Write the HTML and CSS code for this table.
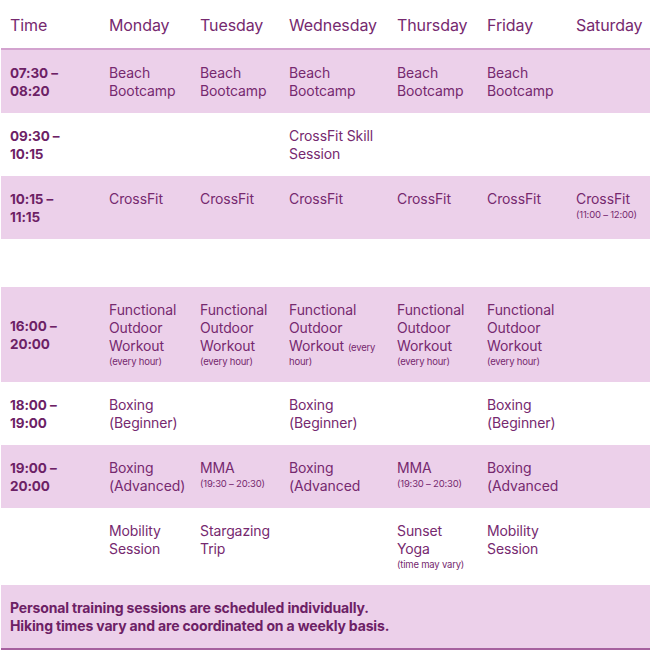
FILE: index.html
```html
<!DOCTYPE html>
<html lang="en">
<head>
<meta charset="utf-8">
<title>Weekly Schedule</title>
<link rel="stylesheet" href="styles.css">
</head>
<body>
<table class="schedule">
  <colgroup>
    <col class="c-time"><col class="c-mon"><col class="c-tue"><col class="c-wed"><col class="c-thu"><col class="c-fri"><col class="c-sat">
  </colgroup>
  <thead>
    <tr>
      <th>Time</th><th>Monday</th><th>Tuesday</th><th>Wednesday</th><th>Thursday</th><th>Friday</th><th>Saturday</th>
    </tr>
  </thead>
  <tbody>
    <tr class="shade">
      <td class="time">07:30 –<br>08:20</td>
      <td>Beach<br>Bootcamp</td>
      <td>Beach<br>Bootcamp</td>
      <td>Beach<br>Bootcamp</td>
      <td>Beach<br>Bootcamp</td>
      <td>Beach<br>Bootcamp</td>
      <td></td>
    </tr>
    <tr>
      <td class="time">09:30 –<br>10:15</td>
      <td></td>
      <td></td>
      <td>CrossFit Skill Session</td>
      <td></td>
      <td></td>
      <td></td>
    </tr>
    <tr class="shade">
      <td class="time">10:15 –<br>11:15</td>
      <td>CrossFit</td>
      <td>CrossFit</td>
      <td>CrossFit</td>
      <td>CrossFit</td>
      <td>CrossFit</td>
      <td>CrossFit<span class="note block">(11:00 – 12:00)</span></td>
    </tr>
    <tr class="spacer">
      <td colspan="7"></td>
    </tr>
    <tr class="shade">
      <td class="time">16:00 –<br>20:00</td>
      <td>Functional Outdoor Workout <span class="note block">(every hour)</span></td>
      <td>Functional Outdoor Workout <span class="note block">(every hour)</span></td>
      <td>Functional<br>Outdoor<br>Workout<span class="note gap">(every</span><span class="note block">hour)</span></td>
      <td>Functional Outdoor Workout <span class="note block">(every hour)</span></td>
      <td>Functional Outdoor Workout <span class="note block">(every hour)</span></td>
      <td></td>
    </tr>
    <tr>
      <td class="time">18:00 –<br>19:00</td>
      <td>Boxing<br>(Beginner)</td>
      <td></td>
      <td>Boxing<br>(Beginner)</td>
      <td></td>
      <td>Boxing<br>(Beginner)</td>
      <td></td>
    </tr>
    <tr class="shade">
      <td class="time">19:00 –<br>20:00</td>
      <td>Boxing<br>(Advanced)</td>
      <td>MMA<span class="note block">(19:30 – 20:30)</span></td>
      <td>Boxing<br>(Advanced</td>
      <td>MMA<span class="note block">(19:30 – 20:30)</span></td>
      <td>Boxing<br>(Advanced</td>
      <td></td>
    </tr>
    <tr class="last">
      <td class="time"></td>
      <td>Mobility<br>Session</td>
      <td>Stargazing<br>Trip</td>
      <td></td>
      <td>Sunset<br>Yoga<span class="note block">(time may vary)</span></td>
      <td>Mobility<br>Session</td>
      <td></td>
    </tr>
  </tbody>
  <tfoot>
    <tr>
      <td colspan="7">Personal training sessions are scheduled individually.<br>Hiking times vary and are coordinated on a weekly basis.</td>
    </tr>
  </tfoot>
</table>
</body>
</html>
```
FILE: styles.css
```css
html, body {
  margin: 0;
  padding: 0;
  background: #ffffff;
}

body {
  font-family: Inter, "Liberation Sans", sans-serif;
  color: #76296f;
}

.schedule {
  width: 649px;
  margin-left: 1px;
  border-collapse: collapse;
  table-layout: fixed;
}

.c-time { width: 99px; }
.c-mon { width: 91px; }
.c-tue { width: 89px; }
.c-wed { width: 108px; }
.c-thu { width: 90px; }
.c-fri { width: 89px; }
.c-sat { width: 83px; }

.schedule th {
  text-align: left;
  font-weight: 400;
  font-size: 16px;
  line-height: 20px;
  padding: 15px 0 13px 9px;
  border-bottom: 2px solid #d3a3cf;
  white-space: nowrap;
  letter-spacing: -0.1px;
}

.schedule td {
  vertical-align: top;
  text-align: left;
  font-size: 14px;
  line-height: 18px;
  padding: 14px 4px 13px 9px;
  letter-spacing: -0.1px;
}

.schedule td.time {
  vertical-align: middle;
  font-weight: 700;
  font-size: 13.5px;
  color: #6c2165;
}

.shade td {
  background: #ecd0ea;
}

.spacer td {
  height: 21px;
}

.note {
  font-size: 9.5px;
  line-height: 14px;
  letter-spacing: -0.2px;
}

.note.gap {
  margin-left: 4px;
}

.note.block {
  display: block;
  line-height: 14px;
}

.schedule tfoot td {
  background: #ecd0ea;
  font-weight: 700;
  font-size: 14px;
  line-height: 18px;
  letter-spacing: -0.15px;
  padding: 14px 9px 13px 9px;
  border-bottom: 2px solid #a6619f;
  color: #6c2165;
}
```
